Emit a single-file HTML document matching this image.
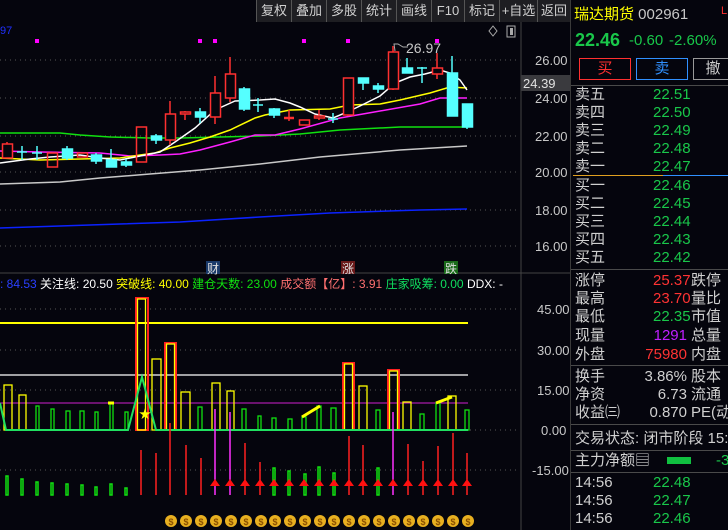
<!DOCTYPE html>
<html><head><meta charset="utf-8"><style>
*{margin:0;padding:0;box-sizing:border-box}
body{width:728px;height:530px;background:#05050d;overflow:hidden;position:relative;font-family:"Liberation Sans","Noto Sans CJK SC",sans-serif;color:#c8c8c8}
.t{position:absolute;white-space:nowrap;line-height:1}
.rp{position:absolute;left:570px;top:0;width:158px;height:530px;border-left:1px solid #3a3a3a;background:#05050d;overflow:hidden}
.r{position:absolute;left:4px;font-size:15px;color:#d0d0d0;line-height:1;white-space:nowrap}
.g{color:#19c74a}.rd{color:#ff3333}
.hl{position:absolute;left:0;width:158px;height:1px;background:#4a4a4a}
.tb{position:absolute;top:0;height:22px;background:#1e1e22;border-left:1px solid #555;font-size:13px;color:#d0d0d0;text-align:center;line-height:21px}
</style></head><body>
<svg width="570" height="530" style="position:absolute;left:0;top:0" xmlns="http://www.w3.org/2000/svg">
<g stroke="#555" stroke-dasharray="1,4" stroke-width="1">
<line x1="0" y1="60" x2="520" y2="60"/><line x1="0" y1="98" x2="520" y2="98"/><line x1="0" y1="136" x2="520" y2="136"/><line x1="0" y1="172" x2="520" y2="172"/><line x1="0" y1="210" x2="520" y2="210"/><line x1="0" y1="246" x2="520" y2="246"/>
<line x1="0" y1="309" x2="520" y2="309"/><line x1="0" y1="350" x2="520" y2="350"/><line x1="0" y1="390" x2="520" y2="390"/><line x1="0" y1="430" x2="520" y2="430"/><line x1="0" y1="470" x2="520" y2="470"/>
</g>
<line x1="521" y1="22" x2="521" y2="530" stroke="#444"/>
<line x1="0" y1="273" x2="570" y2="273" stroke="#444"/>
<g fill="none" stroke-width="1.5">
<polyline stroke="#0b22ff" points="0,228 60,226 120,224 180,222 260,217 330,213 420,210 467,209"/>
<polyline stroke="#c8c8c8" points="0,184 60,182 100,178 150,174 200,170 260,164 320,157 400,150 467,146"/>
<polyline stroke="#10e010" points="0,133 60,133 80,135 110,137 150,138 180,138 220,137 260,136 300,134 340,130 400,127 467,127"/>
<polyline stroke="#ff20ff" points="0,151 40,152 100,153 130,156 160,155 180,154 200,150 230,142 255,135 275,135 300,129 340,118 380,111 420,104 440,98 467,98"/>
<polyline stroke="#ffff00" points="0,158 40,160 80,159 120,158 140,155 155,153 170,148 190,143 210,137 230,130 255,118 265,115 290,110 330,109 350,105 380,104 400,100 430,93 450,87 467,88"/>
<polyline stroke="#ffffff" points="0,163 30,159 50,157 80,155 100,158 120,160 135,157 160,152 175,142 195,128 215,110 235,101 260,100 275,99 290,103 300,107 315,114 333,118 345,113 360,106 380,96 395,83 410,77 425,74 440,70 450,73 460,80 467,90"/>
</g>
<g stroke-width="1.5">
<g stroke="#ff3030" fill="none">
<line x1="7" y1="142" x2="7" y2="158"/><rect x="2.5" y="144" width="10" height="14" fill="#05050d"/>
<rect x="47.5" y="153" width="10" height="14"/>
<rect x="77.5" y="153" width="10" height="4"/>
<rect x="136.5" y="127" width="10" height="35"/>
<line x1="170" y1="101" x2="170" y2="145"/><rect x="165.5" y="114" width="10" height="26" fill="#05050d"/>
<line x1="185" y1="111" x2="185" y2="120"/><rect x="180.5" y="112" width="10" height="2" fill="#05050d"/>
<line x1="215" y1="76" x2="215" y2="124"/><rect x="210.5" y="93" width="10" height="24" fill="#05050d"/>
<line x1="230" y1="57" x2="230" y2="102"/><rect x="225.5" y="74" width="10" height="24" fill="#05050d"/>
<line x1="289" y1="110" x2="289" y2="121"/><line x1="284" y1="118" x2="294" y2="118" stroke-width="2.5"/>
<rect x="299.5" y="120" width="10" height="5"/>
<line x1="319" y1="110" x2="319" y2="120"/><rect x="314.5" y="116" width="10" height="2" fill="#05050d"/>
<line x1="348" y1="78" x2="348" y2="116"/><rect x="343.5" y="78" width="10" height="37" fill="#05050d"/>
<line x1="393" y1="46" x2="393" y2="90"/><rect x="388.5" y="52" width="10" height="37" fill="#05050d"/>
<line x1="437" y1="53" x2="437" y2="79"/><rect x="432.5" y="68" width="10" height="6" fill="#05050d"/>
</g>
<g stroke="#55ffff" fill="#55ffff">
<line x1="22" y1="146" x2="22" y2="160"/><line x1="17" y1="152" x2="27" y2="152"/>
<line x1="37" y1="146" x2="37" y2="160"/><line x1="32" y1="153" x2="42" y2="153"/>
<line x1="67" y1="146" x2="67" y2="160"/><rect x="62.5" y="149" width="10" height="9"/>
<line x1="96" y1="153" x2="96" y2="164"/><rect x="91.5" y="155" width="10" height="6"/>
<line x1="111" y1="149" x2="111" y2="167"/><rect x="106.5" y="160" width="10" height="7"/>
<line x1="126" y1="159" x2="126" y2="167"/><rect x="121.5" y="162" width="10" height="3"/>
<line x1="156" y1="134" x2="156" y2="144"/><rect x="151.5" y="136" width="10" height="4"/>
<line x1="200" y1="108" x2="200" y2="123"/><rect x="195.5" y="112" width="10" height="5"/>
<line x1="244" y1="87" x2="244" y2="111"/><rect x="239.5" y="89" width="10" height="20"/>
<line x1="258" y1="98" x2="258" y2="112"/><line x1="253" y1="105" x2="263" y2="105"/>
<line x1="274" y1="108" x2="274" y2="118"/><rect x="269.5" y="109" width="10" height="6"/>
<line x1="333" y1="113" x2="333" y2="123"/><line x1="328" y1="119" x2="338" y2="119"/>
<line x1="363" y1="78" x2="363" y2="90"/><rect x="358.5" y="78" width="10" height="5"/>
<line x1="378" y1="83" x2="378" y2="93"/><rect x="373.5" y="86" width="10" height="3"/>
<line x1="407" y1="58" x2="407" y2="73"/><rect x="402.5" y="68" width="10" height="5"/>
<line x1="422" y1="67" x2="422" y2="83"/><line x1="417" y1="68" x2="427" y2="68"/>
<line x1="452" y1="56" x2="452" y2="116"/><rect x="447.5" y="73" width="10" height="43"/>
<line x1="467" y1="104" x2="467" y2="129"/><rect x="462.5" y="104" width="10" height="23"/>
</g>
</g>
<g fill="#ff00ff"><rect x="35" y="39" width="4" height="4"/><rect x="198" y="39" width="4" height="4"/><rect x="213" y="39" width="4" height="4"/><rect x="302" y="39" width="4" height="4"/><rect x="346" y="39" width="4" height="4"/><rect x="435" y="39" width="4" height="4"/></g>
<path d="M395,51 L394,44 L398,44 L403,47 L408,47" fill="none" stroke="#aaa"/>
<text x="406" y="53" font-size="14" fill="#c8c8c8" font-family="Liberation Sans">26.97</text>
<text x="0" y="34" font-size="11" fill="#2030ff" font-family="Liberation Sans">97</text>
<path d="M493,26 L497,31 L493,36 L489,31 Z" fill="none" stroke="#aaa"/>
<rect x="507" y="26" width="8" height="11" fill="none" stroke="#aaa"/><rect x="510" y="28" width="3" height="7" fill="#aaa"/>
<g font-size="13" fill="#c8c8c8" font-family="Liberation Sans">
<text x="535" y="65">26.00</text><text x="535" y="103">24.00</text><text x="535" y="141">22.00</text><text x="535" y="177">20.00</text><text x="535" y="215">18.00</text><text x="535" y="251">16.00</text>
<text x="537" y="314">45.00</text><text x="537" y="355">30.00</text><text x="537" y="395">15.00</text><text x="541" y="435">0.00</text><text x="532" y="475">-15.00</text>
</g>
<rect x="521" y="75" width="49" height="16" fill="#3a3a3e"/>
<text x="523" y="88" font-size="13" fill="#e0e0e0" font-family="Liberation Sans">24.39</text>
<rect x="206" y="261" width="14" height="13" fill="#1a3a6a"/><text x="207" y="273" font-size="12" fill="#ddd" font-family="Noto Sans CJK SC">财</text>
<rect x="341" y="261" width="14" height="13" fill="#6a1a1a"/><text x="342" y="273" font-size="12" fill="#ddd" font-family="Noto Sans CJK SC">涨</text>
<rect x="444" y="261" width="14" height="13" fill="#1a6a1a"/><text x="445" y="273" font-size="12" fill="#ddd" font-family="Noto Sans CJK SC">跌</text>
<line x1="0" y1="323" x2="468" y2="323" stroke="#ffff00" stroke-width="2"/>
<line x1="0" y1="375" x2="468" y2="375" stroke="#fff" stroke-width="1.2"/>
<line x1="0" y1="403" x2="468" y2="403" stroke="#d020d0" stroke-width="1"/>
<g fill="none" stroke-width="1.3">
<g stroke="#ffff00">
<rect x="4" y="385" width="8" height="45"/><rect x="19" y="395" width="7" height="35"/><rect x="152" y="359" width="9" height="71"/><rect x="181" y="392" width="9" height="38"/><rect x="212" y="383" width="8" height="47"/><rect x="227" y="391" width="7" height="39"/><rect x="359" y="386" width="8" height="44"/><rect x="403" y="402" width="8" height="28"/><rect x="448" y="396" width="8" height="34"/>
</g>
<g stroke="#ff2020" stroke-width="2">
<rect x="136" y="298" width="12" height="132"/><rect x="165" y="343" width="11" height="87"/><rect x="343" y="363" width="11" height="67"/><rect x="388" y="370" width="11" height="60"/>
</g>
<g stroke="#ffff00"><rect x="137.5" y="299" width="8" height="131"/><rect x="166.5" y="344" width="8" height="86"/><rect x="344.5" y="364" width="8" height="66"/><rect x="389.5" y="371" width="8" height="59"/></g>
<g stroke="#10e010">
<rect x="36" y="406" width="3" height="24"/><rect x="51" y="409" width="3" height="21"/><rect x="66" y="411" width="4" height="19"/><rect x="80" y="411" width="4" height="19"/><rect x="95" y="412" width="3" height="18"/><rect x="110" y="403" width="3" height="27"/><rect x="125" y="412" width="3" height="18"/><rect x="198" y="407" width="4" height="23"/><rect x="242" y="409" width="4" height="21"/><rect x="258" y="416" width="3" height="14"/><rect x="272" y="418" width="4" height="12"/><rect x="288" y="419" width="4" height="11"/><rect x="302" y="417" width="4" height="13"/><rect x="317" y="406" width="4" height="24"/><rect x="331" y="408" width="5" height="22"/><rect x="376" y="410" width="4" height="20"/><rect x="420" y="414" width="4" height="16"/><rect x="436" y="403" width="4" height="27"/><rect x="465" y="410" width="4" height="20"/>
</g>
</g>
<g stroke="#ffff00" stroke-width="3"><line x1="302" y1="417" x2="320" y2="406"/><line x1="436" y1="403" x2="452" y2="397"/><line x1="108" y1="403" x2="114" y2="403"/></g>
<polyline points="0,403 6,430 128,430 142,377 156,430 468,430" fill="none" stroke="#20e060" stroke-width="2"/>
<text x="139" y="418" font-size="12" fill="#ffff00">★</text>
<g stroke-width="1.5" fill="none">
<g stroke="#10e010">
<rect x="6" y="476" width="2" height="19"/><rect x="21" y="479" width="2" height="16"/><rect x="36" y="482" width="2" height="13"/><rect x="51" y="483" width="2" height="12"/><rect x="66" y="484" width="2" height="11"/><rect x="81" y="485" width="2" height="10"/><rect x="95" y="487" width="2" height="8"/><rect x="110" y="484" width="2" height="11"/><rect x="125" y="488" width="2" height="7"/>
<rect x="273" y="468" width="2" height="27"/><rect x="288" y="471" width="2" height="24"/><rect x="304" y="474" width="2" height="21"/><rect x="318" y="467" width="2" height="28"/><rect x="333" y="473" width="2" height="22"/><rect x="377" y="468" width="2" height="27"/>
</g>
<g stroke="#ff2020">
<line x1="141" y1="450" x2="141" y2="495"/><line x1="156" y1="453" x2="156" y2="495"/><line x1="170" y1="423" x2="170" y2="495"/><line x1="186" y1="445" x2="186" y2="495"/><line x1="201" y1="458" x2="201" y2="495"/><line x1="245" y1="443" x2="245" y2="495"/><line x1="260" y1="462" x2="260" y2="495"/><line x1="349" y1="436" x2="349" y2="495"/><line x1="363" y1="445" x2="363" y2="495"/><line x1="408" y1="444" x2="408" y2="495"/><line x1="423" y1="461" x2="423" y2="495"/><line x1="438" y1="446" x2="438" y2="495"/><line x1="453" y1="433" x2="453" y2="495"/><line x1="467" y1="453" x2="467" y2="495"/>
</g>
<g stroke="#ff30ff"><line x1="215" y1="409" x2="215" y2="495"/><line x1="230" y1="412" x2="230" y2="495"/><line x1="393" y1="412" x2="393" y2="495"/></g>
</g>
<g fill="#ff1010">
<path d="M210,486 L215,479 L220,486 Z M225,486 L230,479 L235,486 Z M240,486 L245,479 L250,486 Z M255,486 L260,479 L265,486 Z M269,486 L274,479 L279,486 Z M284,486 L289,479 L294,486 Z M299,486 L304,479 L309,486 Z M314,486 L319,479 L324,486 Z M329,486 L334,479 L339,486 Z M344,486 L349,479 L354,486 Z M358,486 L363,479 L368,486 Z M373,486 L378,479 L383,486 Z M388,486 L393,479 L398,486 Z M403,486 L408,479 L413,486 Z M418,486 L423,479 L428,486 Z M433,486 L438,479 L443,486 Z M448,486 L453,479 L458,486 Z M462,486 L467,479 L472,486 Z"/>
</g>
<g>
<g fill="#e8b020">
<circle cx="171" cy="521" r="6"/><circle cx="186" cy="521" r="6"/><circle cx="201" cy="521" r="6"/><circle cx="216" cy="521" r="6"/><circle cx="231" cy="521" r="6"/><circle cx="246" cy="521" r="6"/><circle cx="261" cy="521" r="6"/><circle cx="275" cy="521" r="6"/><circle cx="290" cy="521" r="6"/><circle cx="305" cy="521" r="6"/><circle cx="320" cy="521" r="6"/><circle cx="334" cy="521" r="6"/><circle cx="349" cy="521" r="6"/><circle cx="364" cy="521" r="6"/><circle cx="379" cy="521" r="6"/><circle cx="394" cy="521" r="6"/><circle cx="409" cy="521" r="6"/><circle cx="423" cy="521" r="6"/><circle cx="438" cy="521" r="6"/><circle cx="453" cy="521" r="6"/><circle cx="468" cy="521" r="6"/>
</g>
<g font-size="9" fill="#8a5000" font-weight="bold" text-anchor="middle" font-family="Liberation Sans">
<text x="171" y="525">$</text><text x="186" y="525">$</text><text x="201" y="525">$</text><text x="216" y="525">$</text><text x="231" y="525">$</text><text x="246" y="525">$</text><text x="261" y="525">$</text><text x="275" y="525">$</text><text x="290" y="525">$</text><text x="305" y="525">$</text><text x="320" y="525">$</text><text x="334" y="525">$</text><text x="349" y="525">$</text><text x="364" y="525">$</text><text x="379" y="525">$</text><text x="394" y="525">$</text><text x="409" y="525">$</text><text x="423" y="525">$</text><text x="438" y="525">$</text><text x="453" y="525">$</text><text x="468" y="525">$</text>
</g>
</g>
</svg>
<div class="t" style="left:0;top:278px;font-size:12px;font-family:'Liberation Sans','Noto Sans CJK SC',sans-serif">
<span style="color:#2a40ff">: 84.53</span> <span style="color:#fff">关注线: 20.50</span> <span style="color:#ffff00">突破线: 40.00</span> <span style="color:#10e010">建仓天数: 23.00</span> <span style="color:#ff7070">成交额【亿】: 3.91</span> <span style="color:#10e060">庄家吸筹: 0.00</span> <span style="color:#fff">DDX: -</span></div>
<div class="tb" style="left:256px;width:35px">复权</div>
<div class="tb" style="left:291px;width:35px">叠加</div>
<div class="tb" style="left:326px;width:35px">多股</div>
<div class="tb" style="left:361px;width:35px">统计</div>
<div class="tb" style="left:396px;width:35px">画线</div>
<div class="tb" style="left:431px;width:33px">F10</div>
<div class="tb" style="left:464px;width:35px">标记</div>
<div class="tb" style="left:499px;width:38px">+自选</div>
<div class="tb" style="left:537px;width:33px">返回</div>
<div class="rp">
<div class="t" style="left:3px;top:7px;font-size:15px;color:#ffff00">瑞达期货 <span style="color:#c8c8c8;font-size:15px">002961</span></div>
<div class="t" style="left:150px;top:6px;font-size:11px;color:#ff3030">L</div>
<div class="t g" style="left:4px;top:31px;font-size:18px;font-weight:bold">22.46</div>
<div class="t g" style="left:58px;top:33px;font-size:15px">-0.60</div>
<div class="t g" style="left:98px;top:33px;font-size:15px">-2.60%</div>
<div style="position:absolute;left:8px;top:58px;width:52px;height:22px;border:1px solid #ff3030;color:#ff3030;font-size:15px;text-align:center;line-height:20px">买</div>
<div style="position:absolute;left:65px;top:58px;width:52px;height:22px;border:1px solid #3090ff;color:#3090ff;font-size:15px;text-align:center;line-height:20px">卖</div>
<div style="position:absolute;left:122px;top:58px;width:40px;height:22px;border:1px solid #999;color:#ccc;font-size:15px;text-align:center;line-height:20px">撤</div>
<div class="hl" style="top:85px"></div>
<div class="r" style="top:87px">卖五</div><div class="r g" style="left:82px;top:87px">22.51</div>
<div class="r" style="top:105px">卖四</div><div class="r g" style="left:82px;top:105px">22.50</div>
<div class="r" style="top:123px">卖三</div><div class="r g" style="left:82px;top:123px">22.49</div>
<div class="r" style="top:141px">卖二</div><div class="r g" style="left:82px;top:141px">22.48</div>
<div class="r" style="top:159px">卖一</div><div class="r g" style="left:82px;top:159px">22.47</div>
<div style="position:absolute;left:2px;top:175px;width:90px;height:1px;background:#e0a020"></div><div style="position:absolute;left:92px;top:175px;width:66px;height:1px;background:#3090ff"></div>
<div class="r" style="top:178px">买一</div><div class="r g" style="left:82px;top:178px">22.46</div>
<div class="r" style="top:196px">买二</div><div class="r g" style="left:82px;top:196px">22.45</div>
<div class="r" style="top:214px">买三</div><div class="r g" style="left:82px;top:214px">22.44</div>
<div class="r" style="top:232px">买四</div><div class="r g" style="left:82px;top:232px">22.43</div>
<div class="r" style="top:250px">买五</div><div class="r g" style="left:82px;top:250px">22.42</div>
<div class="hl" style="top:269px"></div>
<div class="r" style="top:273px">涨停</div><div class="r rd" style="left:82px;top:273px;width:34px;text-align:right">25.37</div><div class="r" style="left:120px;top:273px">跌停</div>
<div class="r" style="top:291px">最高</div><div class="r rd" style="left:82px;top:291px;width:34px;text-align:right">23.70</div><div class="r" style="left:120px;top:291px">量比</div>
<div class="r" style="top:309px">最低</div><div class="r g" style="left:82px;top:309px;width:34px;text-align:right">22.35</div><div class="r" style="left:120px;top:309px">市值</div>
<div class="r" style="top:328px">现量</div><div class="r" style="left:72px;top:328px;width:44px;text-align:right;color:#c020ff">1291</div><div class="r" style="left:120px;top:328px">总量</div>
<div class="r" style="top:347px">外盘</div><div class="r rd" style="left:72px;top:347px;width:44px;text-align:right">75980</div><div class="r" style="left:120px;top:347px">内盘</div>
<div class="hl" style="top:365px"></div>
<div class="r" style="top:369px">换手</div><div class="r" style="left:62px;top:369px;width:54px;text-align:right">3.86%</div><div class="r" style="left:120px;top:369px">股本</div>
<div class="r" style="top:387px">净资</div><div class="r" style="left:62px;top:387px;width:54px;text-align:right">6.73</div><div class="r" style="left:120px;top:387px">流通</div>
<div class="r" style="top:405px">收益㈢</div><div class="r" style="left:62px;top:405px;width:54px;text-align:right">0.870</div><div class="r" style="left:120px;top:405px">PE(动)</div>
<div class="hl" style="top:424px"></div>
<div class="r" style="top:431px">交易状态: 闭市阶段 15:00</div>
<div class="hl" style="top:450px"></div>
<div class="r" style="top:453px">主力净额▤</div>
<div style="position:absolute;left:96px;top:457px;width:24px;height:7px;background:#10c040"></div>
<div class="r g" style="left:145px;top:453px">-3</div>
<div class="hl" style="top:472px"></div>
<div class="r" style="top:475px">14:56</div><div class="r g" style="left:82px;top:475px">22.48</div>
<div class="r" style="top:493px">14:56</div><div class="r g" style="left:82px;top:493px">22.47</div>
<div class="r" style="top:511px">14:56</div><div class="r g" style="left:82px;top:511px">22.46</div>
</div>
</body></html>
